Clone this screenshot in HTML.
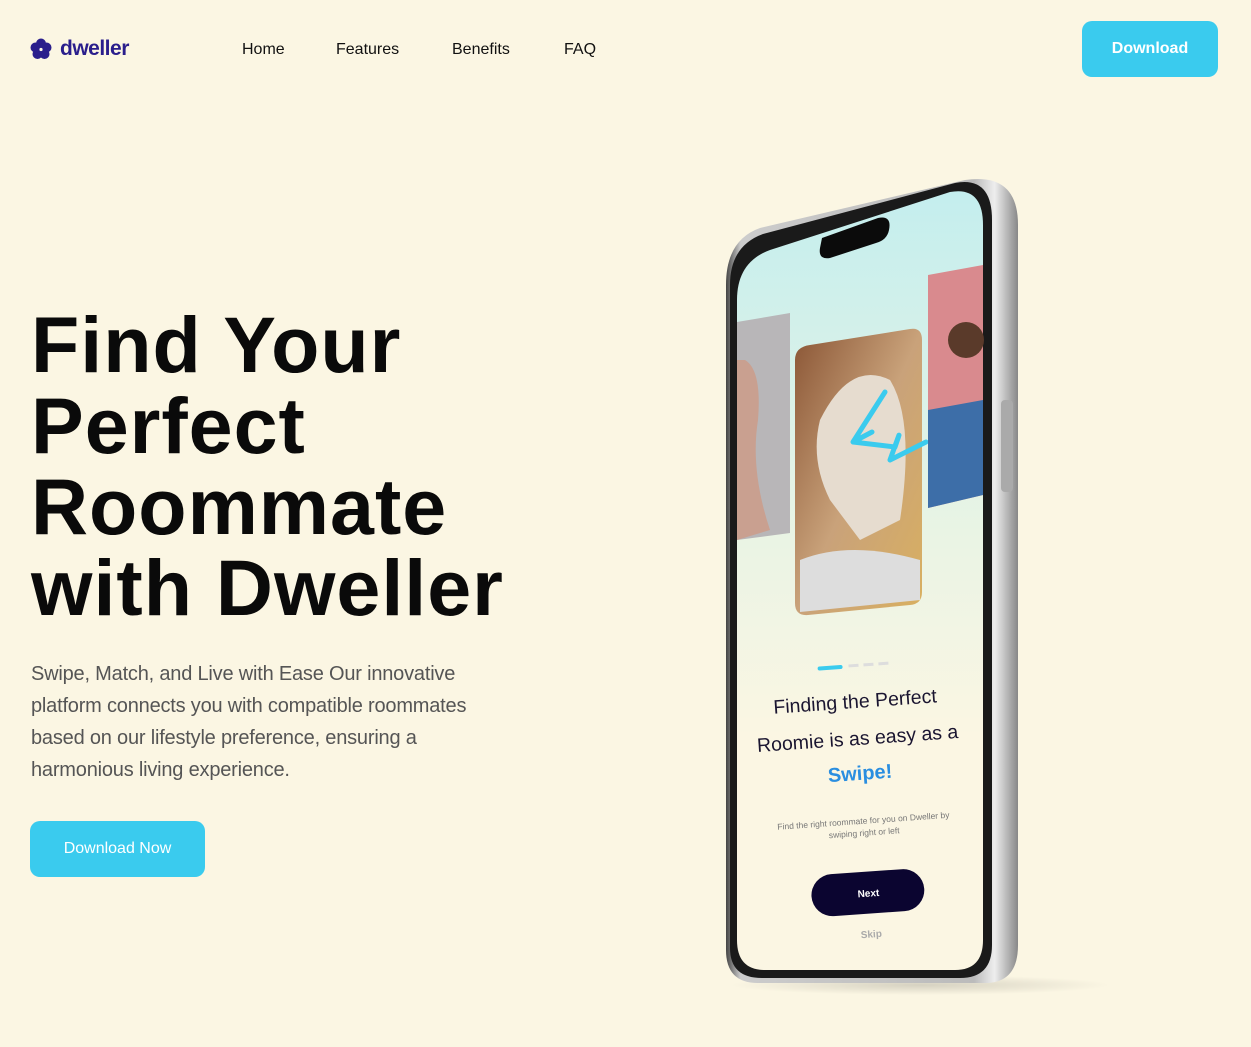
<!DOCTYPE html>
<html><head><meta charset="utf-8"><style>
*{margin:0;padding:0;box-sizing:border-box}
body{width:1251px;height:1047px;background:#FBF6E3;font-family:"Liberation Sans",sans-serif;position:relative;overflow:hidden}
.logo{position:absolute;left:30px;top:37px;display:flex;align-items:center;gap:8px;color:#2A1E8C;font-weight:bold;font-size:21px;letter-spacing:-0.5px}
.nav a{position:absolute;top:41px;font-size:16px;color:#111;text-decoration:none}
.btn{position:absolute;background:#3ACBEE;color:#fff;font-size:16px;font-weight:bold;border-radius:10px;display:flex;align-items:center;justify-content:center}
h1{position:absolute;left:31px;top:304px;font-size:79px;line-height:81px;font-weight:bold;color:#0a0a0a;letter-spacing:1px}
p{position:absolute;left:31px;top:658px;width:480px;font-size:20px;line-height:32px;color:#555;letter-spacing:-0.2px}
</style></head><body>
<div class="logo"><svg width="22" height="22" viewBox="0 0 22 22"><g fill="#2A1E8C"><circle cx="11" cy="5.5" r="5"/><circle cx="16.5" cy="9.5" r="5"/><circle cx="14.5" cy="16" r="5"/><circle cx="7.5" cy="16" r="5"/><circle cx="5.5" cy="9.5" r="5"/></g><circle cx="11" cy="11.5" r="1.6" fill="#FBF6E3"/></svg>dweller</div>
<div class="nav"><a style="left:242px">Home</a><a style="left:336px">Features</a><a style="left:452px">Benefits</a><a style="left:564px">FAQ</a></div>
<div class="btn" style="left:1082px;top:21px;width:136px;height:56px">Download</div>
<h1>Find Your<br>Perfect<br>Roommate<br>with Dweller</h1>
<p>Swipe, Match, and Live with Ease Our innovative platform connects you with compatible roommates based on our lifestyle preference, ensuring a harmonious living experience.</p>
<div class="btn" style="left:30px;top:821px;width:175px;height:56px;font-weight:normal;font-size:16px">Download Now</div>

<svg style="position:absolute;left:0;top:0" width="1251" height="1047">
<defs>
<linearGradient id="fr" x1="0" x2="1"><stop offset="0" stop-color="#444"/><stop offset=".05" stop-color="#ccc"/><stop offset=".85" stop-color="#bbb"/><stop offset=".92" stop-color="#eee"/><stop offset="1" stop-color="#888"/></linearGradient>
<linearGradient id="sc" x1="0" y1="0" x2="0" y2="1"><stop offset="0" stop-color="#C4EEEE"/><stop offset=".45" stop-color="#EAF4E4"/><stop offset=".7" stop-color="#FBF6E3"/></linearGradient>
<linearGradient id="cc" x1="0" y1="0" x2="1" y2="1"><stop offset="0" stop-color="#8a5535"/><stop offset=".5" stop-color="#c9a27a"/><stop offset="1" stop-color="#d9b060"/></linearGradient>
<radialGradient id="sh"><stop offset="0" stop-color="#000" stop-opacity=".15"/><stop offset="1" stop-color="#000" stop-opacity="0"/></radialGradient>
</defs>
<ellipse cx="920" cy="985" rx="190" ry="10" fill="url(#sh)"/>
<path d="M760 228 L965 180 Q1018 172 1018 225 L1018 945 Q1018 983 985 983 L758 983 Q726 983 726 950 L726 285 Q726 240 760 228Z" fill="url(#fr)"/>
<path d="M763 234 L955 183 Q992 176 992 220 L992 945 Q992 978 960 978 L762 978 Q730 978 730 948 L730 285 Q730 246 763 234Z" fill="#1a1a1a"/>
<path d="M770 250 L950 192 Q983 186 983 225 L983 940 Q983 970 955 970 L765 970 Q737 970 737 940 L737 300 Q737 262 770 250Z" fill="url(#sc)"/>
<rect x="1001" y="400" width="12" height="92" rx="4" fill="#aaa"/>
<path d="M822 238 L878 218 Q892 215 889 230 Q887 240 876 243 L830 258 Q818 260 820 248Z" fill="#0b0b0b"/>
<path d="M737 322 L790 313 L790 533 L737 540Z" fill="#b8b6b8"/>
<path d="M745 360 Q762 370 758 420 Q750 470 770 530 L737 540 L737 360Z" fill="#c9a090"/>
<path d="M810 345 L910 329 Q922 327 922 340 L922 592 Q922 604 910 605 L808 615 Q795 616 795 603 L795 360 Q795 347 810 345Z" fill="url(#cc)"/>
<path d="M820 420 Q850 360 890 380 Q915 420 900 520 L860 540 L830 500 Q810 460 820 420Z" fill="#e6dccf"/>
<path d="M800 560 Q850 540 920 560 L920 600 L800 612Z" fill="#ddd"/>
<path d="M885 392 L853 442 L872 432 M853 442 L895 447 Q905 418 890 460 L926 442" stroke="#3ACBEE" stroke-width="5" fill="none" stroke-linecap="round" stroke-linejoin="round"/>
<path d="M928 275 L983 265 L983 495 L928 508Z" fill="#d98a8e"/>
<path d="M928 410 L983 400 L983 495 L928 508Z" fill="#3d6ea8"/>
<circle cx="966" cy="340" r="18" fill="#5a3a2a"/>
<g transform="rotate(-4 857 730)" font-family="Liberation Sans,sans-serif" text-anchor="middle">
<rect x="822" y="664" width="25" height="4" rx="2" fill="#3ACBEE"/>
<rect x="853" y="664" width="10" height="3" fill="#ddd"/><rect x="868" y="664" width="10" height="3" fill="#ddd"/><rect x="883" y="664" width="10" height="3" fill="#ddd"/>
<text x="857" y="708" font-size="19.5" fill="#1a1530">Finding the Perfect</text>
<text x="857" y="745" font-size="19.5" fill="#1a1530">Roomie is as easy as a</text>
<text x="857" y="780" font-size="20" font-weight="bold" fill="#2a8ee0">Swipe!</text>
<text x="857" y="824" font-size="8.5" fill="#777">Find the right roommate for you on Dweller by</text>
<text x="857" y="836" font-size="8.5" fill="#777">swiping right or left</text>
<rect x="800" y="872" width="113" height="42" rx="21" fill="#0b0530"/>
<text x="857" y="897" font-size="10" font-weight="bold" fill="#fff">Next</text>
<text x="857" y="938" font-size="10" font-weight="bold" fill="#aaa">Skip</text>
</g>
</svg>
</body></html>
